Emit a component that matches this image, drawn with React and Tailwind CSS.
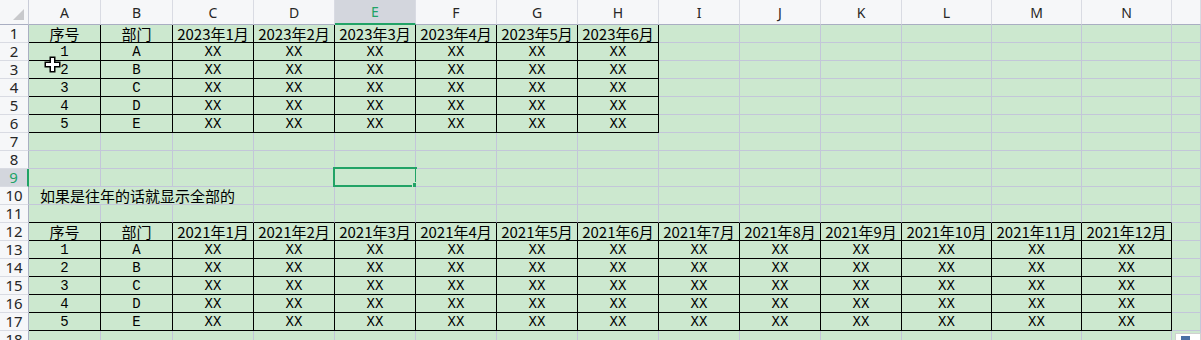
import React from "react";

const COLS = ["A","B","C","D","E","F","G","H","I","J","K","L","M","N",""];

function topTable(r, c) {
  if (r === 1) {
    if (c === 0) return { t: "序号", cjk: true };
    if (c === 1) return { t: "部门", cjk: true };
    if (c <= 7) return { t: `2023年${c - 1}月`, cjk: true };
  }
  if (r >= 2 && r <= 6) {
    if (c === 0) return { t: String(r - 1) };
    if (c === 1) return { t: "ABCDE"[r - 2] };
    if (c <= 7) return { t: "XX" };
  }
  return null;
}

function botTable(r, c) {
  if (r === 12) {
    if (c === 0) return { t: "序号", cjk: true };
    if (c === 1) return { t: "部门", cjk: true };
    if (c <= 13) return { t: `2021年${c - 1}月`, cjk: true };
  }
  if (r >= 13 && r <= 17) {
    if (c === 0) return { t: String(r - 12) };
    if (c === 1) return { t: "ABCDE"[r - 13] };
    if (c <= 13) return { t: "XX" };
  }
  return null;
}

function Cursor() {
  return (
    <svg width="17" height="17" viewBox="0 0 17 17" className="absolute left-[44px] top-[56px]">
      <path d="M5.5 0.5 H11.5 V5.5 H16.5 V11.5 H11.5 V16.5 H5.5 V11.5 H0.5 V5.5 H5.5 Z" fill="#000" />
      <path d="M7 2 H10 V7 H15 V10 H10 V15 H7 V10 H2 V7 H7 Z" fill="#fff" />
    </svg>
  );
}

export default function App() {
  const rows = Array.from({ length: 19 }, (_, i) => i + 1);
  return (
    <div className="relative w-[1201px] h-[340px] overflow-hidden bg-white">
      <div className="grid grid-cols-[29px_72px_72px_repeat(9,81px)_repeat(3,90px)_1fr] grid-rows-[25px_repeat(19,18px)]">
        <div className="relative bg-[#f6f7f9] border-r border-b border-r-[#c9ccd8] border-b-[#a9aec2]">
          <svg width="12" height="12" viewBox="0 0 12 12" className="absolute left-[13px] top-[9px]">
            <path d="M11 0 V11 H0 Z" fill="#c8c9cc" />
          </svg>
        </div>
        {COLS.map((l, i) =>
          l === "E" ? (
            <div key={i} className="flex items-center justify-center bg-[#d3d6dd] border-r border-r-[#d9dbe3] border-b-2 border-b-[#21a366] text-[14px] text-[#21a366] font-['Noto_Sans',sans-serif]">
              {l}
            </div>
          ) : (
            <div key={i} className="flex items-center justify-center bg-[#f6f7f9] border-r border-r-[#d9dbe3] border-b border-b-[#a9aec2] text-[14px] text-[#262626] font-['Noto_Sans',sans-serif]">
              {l}
            </div>
          )
        )}
        {rows.map((r) => {
          const cells = [];
          cells.push(
            r === 9 ? (
              <div key="h" className="flex items-center justify-center bg-[#d3d6dd] border-r-2 border-r-[#21a366] border-b border-b-[#d9dbe3] text-[15px] text-[#21a366] font-['Noto_Sans',sans-serif] leading-none">
                {r}
              </div>
            ) : (
              <div key="h" className="flex items-center justify-center bg-[#f6f7f9] border-r border-r-[#a9aec2] border-b border-b-[#d9dbe3] text-[15px] text-[#262626] font-['Noto_Sans',sans-serif] leading-none">
                {r}
              </div>
            )
          );
          if (r === 10) {
            cells.push(
              <div key="t" className="col-span-3 flex items-center pl-[11px] bg-[#cce8cf] border-r border-b border-r-[#c3c6d9] border-b-[#c3c6d9] text-[15px] text-black font-['Noto_Sans_CJK_SC',sans-serif] leading-none whitespace-nowrap">
                如果是往年的话就显示全部的
              </div>
            );
          }
          for (let c = 0; c < 15; c++) {
            if (r === 10 && c < 3) continue;
            const inTop = r >= 1 && r <= 6 && c <= 7;
            const inBot = r >= 12 && r <= 17 && c <= 13;
            const rightBlack = inTop || inBot;
            const bottomBlack = inTop || inBot || (r === 11 && c <= 13);
            const content = topTable(r, c) || botTable(r, c);
            const cls =
              "relative flex items-center justify-center bg-[#cce8cf] border-r border-b leading-none whitespace-nowrap text-black " +
              (rightBlack ? "border-r-black " : "border-r-[#c3c6d9] ") +
              (bottomBlack ? "border-b-black " : "border-b-[#c3c6d9] ") +
              (content && content.cjk
                ? "text-[15px] font-['Noto_Sans_CJK_SC',sans-serif]"
                : "text-[14px] font-mono pt-[1px]");
            cells.push(
              <div key={c} className={cls}>
                {content ? content.t : null}
                {r === 9 && c === 4 ? (
                  <>
                    <div className="absolute -left-[2px] -top-[2px] w-[84px] h-[20px] border-2 border-[#21a366]" />
                    <div className="absolute left-[77px] top-[13px] w-[7px] h-[7px] bg-[#21a366] border border-[#cce8cf]" />
                  </>
                ) : null}
              </div>
            );
          }
          return <React.Fragment key={r}>{cells}</React.Fragment>;
        })}
      </div>
      <Cursor />
      <div className="absolute left-[1175px] top-[333px] w-[26px] h-[10px] bg-white border border-[#d0d0d0] flex items-start pl-[5px] pt-[2px]">
        <div className="w-[9px] h-[6px] bg-[#4a6fa5]" />
      </div>
    </div>
  );
}
